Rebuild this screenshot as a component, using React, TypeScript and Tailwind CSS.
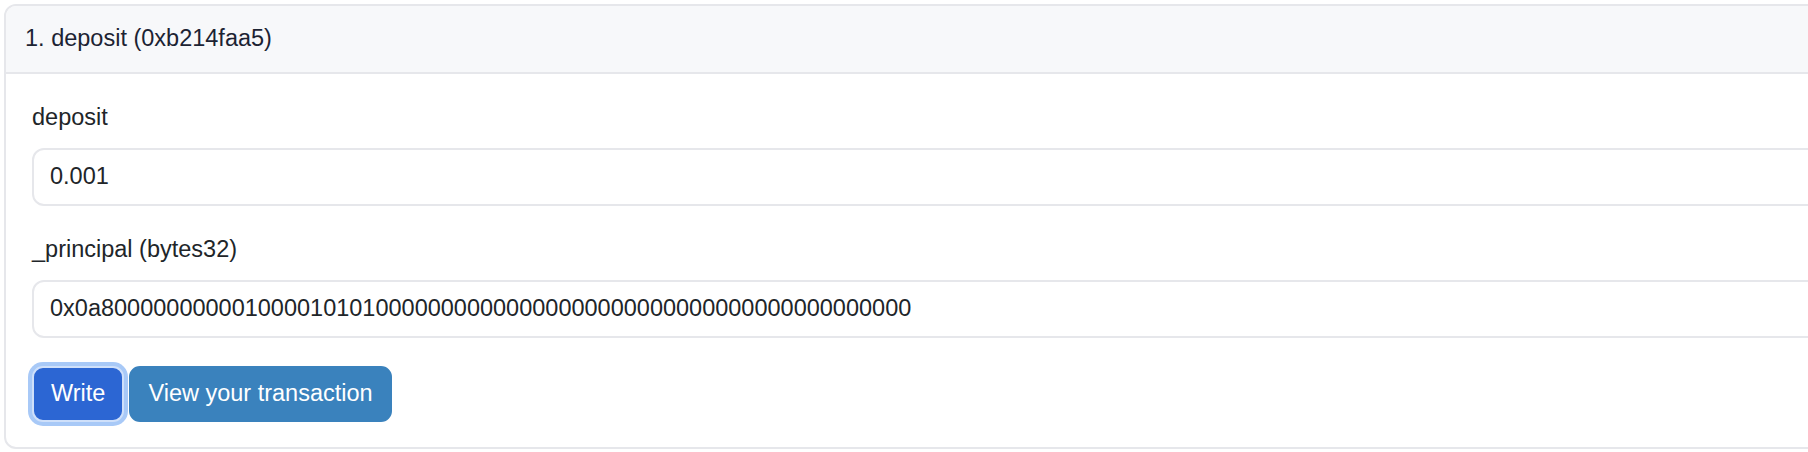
import React from "react";

const PRINCIPAL =
  "0x0a8" + "0".repeat(10) + "1" + "0000" + "1" + "0" + "1" + "0" + "1" + "0".repeat(41);

function Field({ label, value, first }: { label: string; value: string; first?: boolean }) {
  return (
    <div className={first ? "" : "mt-[29px]"}>
      <label className="block leading-[28px] text-[#212529] mb-[17px]">{label}</label>
      <div className="h-[58px] w-full border-2 border-[#e6e7eb] rounded-[12px] bg-white flex items-center pl-[16px] text-[#212529]">
        {value}
      </div>
    </div>
  );
}

export default function App() {
  return (
    <div
      className="h-[452px] w-[1808px] overflow-hidden bg-white pt-[4px] pl-[4px] text-[23.5px]"
      style={{ fontFamily: '"Liberation Sans", Helvetica, Arial, sans-serif' }}
    >
      <section className="w-[1860px] border-2 border-[#e6e7eb] rounded-[12px] bg-white">
        <header className="h-[68px] bg-[#f7f8fa] border-b-2 border-[#e6e7eb] rounded-t-[10px] flex items-center pl-[19px] text-[#1c2333]">
          1. deposit (0xb214faa5)
        </header>
        <div className="pl-[26px] pt-[29px] pb-[25px]">
          <Field first label="deposit" value="0.001" />
          <Field label="_principal (bytes32)" value={PRINCIPAL} />
          <div className="flex gap-[5px] mt-[28px]">
            <button className="h-[56px] px-[17px] border-2 border-[#cfe0fa] rounded-[11px] bg-[#2c66d3] text-white ring-4 ring-[#a8c9f7]">
              Write
            </button>
            <button className="h-[56px] px-[17px] border-2 border-[#3a82bd] rounded-[11px] bg-[#3a82bd] text-white">
              View your transaction
            </button>
          </div>
        </div>
      </section>
    </div>
  );
}
